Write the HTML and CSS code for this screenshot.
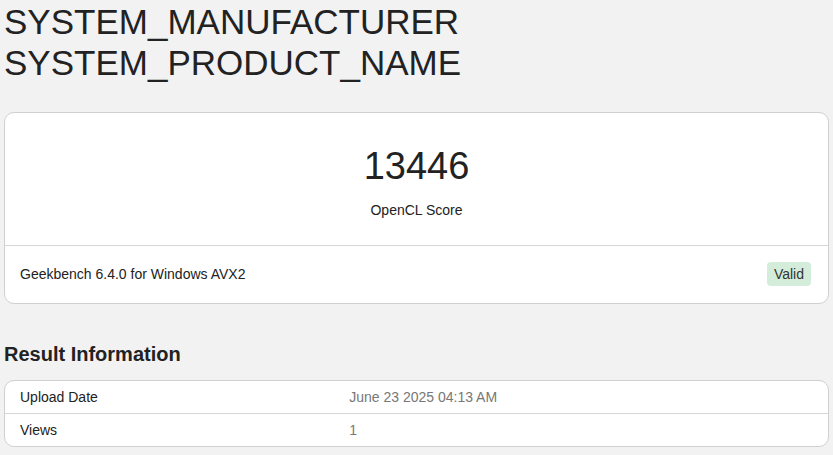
FILE: index.html
```html
<!DOCTYPE html>
<html lang="en">
<head>
  <meta charset="UTF-8" />
  <meta name="viewport" content="width=device-width, initial-scale=1.0" />
  <title>SYSTEM_PRODUCT_NAME - Geekbench</title>
  <link rel="stylesheet" href="styles.css">
</head>
<body>
  <div class="page">
    <h1 class="device-title">SYSTEM_MANUFACTURER<br>SYSTEM_PRODUCT_NAME</h1>

    <div class="card score-card">
      <div class="score-body">
        <div class="score">13446</div>
        <div class="score-label">OpenCL Score</div>
      </div>
      <div class="score-footer">
        <span>Geekbench 6.4.0 for Windows AVX2</span>
        <span class="badge-valid">Valid</span>
      </div>
    </div>

    <h2 class="section-title">Result Information</h2>
    <div class="card info-table">
      <div class="info-row">
        <div class="info-name">Upload Date</div>
        <div class="info-value">June 23 2025 04:13 AM</div>
      </div>
      <div class="info-row">
        <div class="info-name">Views</div>
        <div class="info-value">1</div>
      </div>
    </div>
  </div>
</body>
</html>
```

FILE: styles.css
```css
html, body {
  margin: 0;
  padding: 0;
  background: #f2f2f2;
  font-family: "Liberation Sans", Arial, sans-serif;
  font-size: 14px;
  line-height: 20px;
  color: #222;
}
.page {
  padding: 0 4px;
}
.device-title {
  margin: 1px 0 29px;
  font-size: 35px;
  line-height: 41px;
  font-weight: normal;
  color: #222;
}
.card {
  background: #fff;
  border: 1px solid #d0d0d0;
  border-radius: 10px;
}
.score-body {
  text-align: center;
  padding: 31px 16px 25px;
  border-bottom: 1px solid #d6d6d6;
}
.score {
  font-size: 38px;
  line-height: 45px;
  margin-bottom: 11px;
}
.score-footer {
  display: flex;
  align-items: center;
  justify-content: space-between;
  padding: 16px 17px 17px 15px;
}
.badge-valid {
  background: #d4edda;
  color: #333;
  line-height: 16px;
  padding: 4px 7px;
  border-radius: 4px;
}
.section-title {
  margin: 38px 0 14px;
  font-size: 20px;
  line-height: 24px;
  font-weight: bold;
  color: #222;
}
.info-row {
  display: grid;
  grid-template-columns: 40% 60%;
}
.info-row + .info-row {
  border-top: 1px solid #d6d6d6;
}
.info-name,
.info-value {
  padding: 6px 15px;
}
.info-value {
  color: #777;
}
```
